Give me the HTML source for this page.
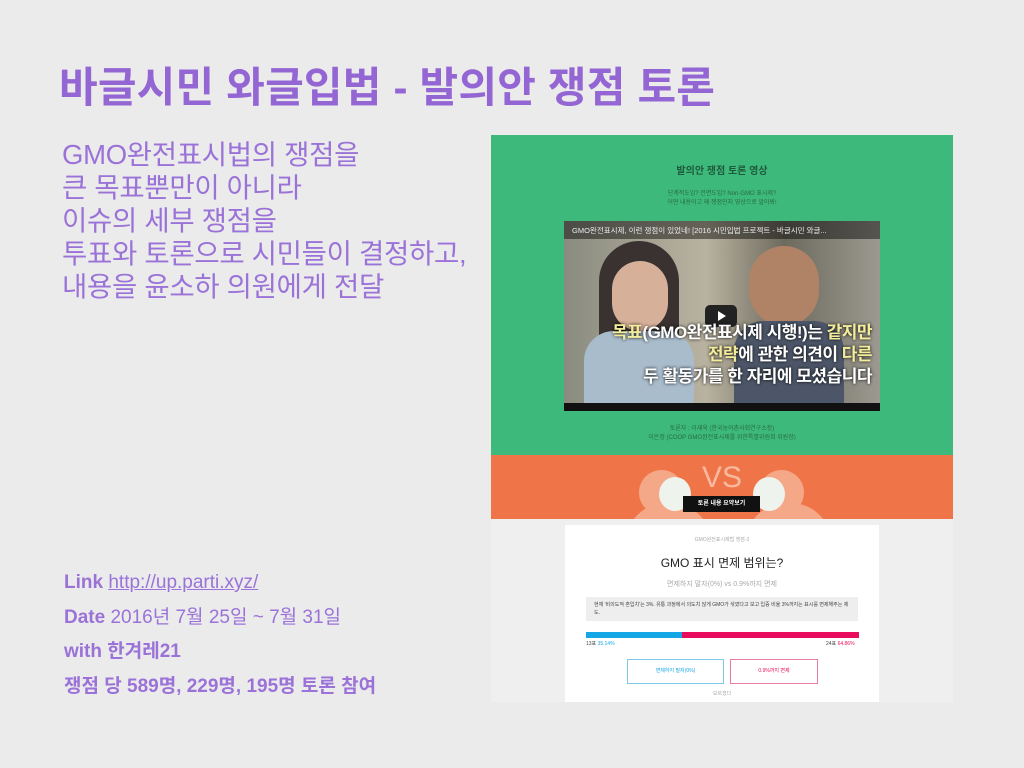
<!DOCTYPE html>
<html><head><meta charset="utf-8"><style>
body{margin:0;width:1024px;height:768px;background:#ebebeb;position:relative;overflow:hidden;font-family:"Liberation Sans","Noto Sans CJK KR",sans-serif;color:#9a6fd6}
.a{position:absolute}
h1{position:absolute;left:59px;top:54px;margin:0;font-size:42px;font-weight:bold;color:#9466d4;letter-spacing:0.2px;white-space:nowrap}
.body{left:62px;top:138px;font-size:27.5px;line-height:33px;color:#9a72d8;white-space:nowrap;letter-spacing:-0.3px}
.info{left:64px;top:566px;font-size:19px;line-height:34.5px;color:#9a72d8;white-space:nowrap}
.info b{font-weight:bold}
.c{text-align:center}
</style></head><body>
<h1>바글시민 와글입법 - 발의안 쟁점 토론</h1>
<div class="a body">GMO완전표시법의 쟁점을<br>큰 목표뿐만이 아니라<br>이슈의 세부 쟁점을<br>투표와 토론으로 시민들이 결정하고,<br>내용을 윤소하 의원에게 전달</div>
<div class="a info"><b>Link</b> <span style="text-decoration:underline">http://up.parti.xyz/</span><br><b>Date</b> 2016년 7월 25일 ~ 7월 31일<br><b>with 한겨레21</b><br><b>쟁점 당 589명, 229명, 195명 토론 참여</b></div>

<div class="a" style="left:491px;top:135px;width:462px;height:320px;background:#3dba7b"></div>
<div class="a c" style="left:491px;top:162px;width:462px;font-size:10px;color:#1f5a3c;font-weight:bold">발의안 쟁점 토론 영상</div>
<div class="a c" style="left:491px;top:190px;width:462px;font-size:6px;line-height:9px;color:#2a6a48">단계적도입? 전면도입? Non-GMO 표시제?<br>어떤 내용이고 왜 쟁점인지 영상으로 알아봐!</div>
<div class="a" style="left:564px;top:221px;width:316px;height:190px;background:#6a7060;overflow:hidden">
 <div class="a" style="left:0;top:0;width:316px;height:190px;background:linear-gradient(90deg,#8a8c80 0%,#b9b2a0 45%,#6d6a5e 70%,#9c9a90 100%)"></div>
 <div class="a" style="left:35px;top:20px;width:80px;height:170px;border-radius:40px 40px 0 0;background:#3a3230"></div>
 <div class="a" style="left:48px;top:40px;width:56px;height:70px;border-radius:28px;background:#d7b09a"></div>
 <div class="a" style="left:20px;top:110px;width:110px;height:80px;border-radius:30px 30px 0 0;background:#a9bccc"></div>
 <div class="a" style="left:185px;top:25px;width:70px;height:80px;border-radius:35px;background:#b08266"></div>
 <div class="a" style="left:170px;top:100px;width:110px;height:90px;border-radius:30px 30px 0 0;background:#4c5668"></div>
 <div class="a" style="left:0;top:0;width:316px;height:18px;background:rgba(0,0,0,.45)"></div>
 <div class="a" style="left:8px;top:4px;font-size:7.5px;color:#eee;white-space:nowrap">GMO완전표시제, 이런 쟁점이 있었네! [2016 시민입법 프로젝트 - 바글시민 와글...</div>
 <div class="a" style="left:141px;top:84px;width:32px;height:22px;border-radius:5px;background:#222"></div>
 <div class="a" style="left:154px;top:90px;border-left:8px solid #fff;border-top:5px solid transparent;border-bottom:5px solid transparent"></div>
 <div class="a" style="right:8px;top:101px;text-align:right;font-size:17px;font-weight:bold;line-height:22px;color:#fff;text-shadow:0 0 3px #000;white-space:nowrap;letter-spacing:-0.5px"><span style="color:#f3ec9a">목표</span>(GMO완전표시제 시행!)는 <span style="color:#f3ec9a">같지만</span><br><span style="color:#f3ec9a">전략</span>에 관한 의견이 <span style="color:#f3ec9a">다른</span><br>두 활동가를 한 자리에 모셨습니다</div>
 <div class="a" style="left:0;bottom:0;width:316px;height:8px;background:#111"></div>
</div>
<div class="a c" style="left:491px;top:425px;width:462px;font-size:6px;line-height:9px;color:#2a6a48">토론자 : 이재욱 (한국농어촌사회연구소장)<br>이은정 (COOP GMO완전표시제를 위한특별위원회 위원장)</div>

<div class="a" style="left:491px;top:455px;width:462px;height:64px;background:#ef7549;overflow:hidden">
 <div class="a" style="left:148px;top:15px;width:45px;height:45px;border-radius:50%;background:#f4a887"></div>
 <div class="a" style="left:135px;top:48px;width:85px;height:40px;border-radius:40px 40px 0 0;background:#f4a887"></div>
 <div class="a" style="left:268px;top:15px;width:45px;height:45px;border-radius:50%;background:#f4a887"></div>
 <div class="a" style="left:255px;top:48px;width:85px;height:40px;border-radius:40px 40px 0 0;background:#f4a887"></div>
 <div class="a" style="left:168px;top:22px;width:32px;height:34px;border-radius:50%;background:#eef3ee"></div>
 <div class="a" style="left:262px;top:22px;width:32px;height:34px;border-radius:50%;background:#eef3ee"></div>
 <div class="a c" style="left:0;top:6px;width:462px;font-size:30px;color:#f8b99f;font-weight:300">VS</div>
 <div class="a c" style="left:192px;top:41px;width:77px;height:16px;background:#111;color:#fff;font-size:6px;line-height:16px;font-weight:bold">토론 내용 요약보기</div>
</div>
<div class="a" style="left:491px;top:519px;width:462px;height:183px;background:#efefef"></div>
<div class="a" style="left:565px;top:525px;width:314px;height:177px;background:#fff"></div>
<div class="a c" style="left:565px;top:536px;width:314px;font-size:5px;color:#aaa">GMO완전표시제법 쟁점-3</div>
<div class="a c" style="left:565px;top:554px;width:314px;font-size:12px;color:#222">GMO 표시 면제 범위는?</div>
<div class="a c" style="left:565px;top:579px;width:314px;font-size:7px;color:#aaa">면제하지 말자(0%) vs 0.9%까지 면제</div>
<div class="a" style="left:586px;top:597px;width:272px;height:24px;background:#eee;font-size:5px;line-height:8px;color:#444;padding:4px 8px;box-sizing:border-box">현재 '비의도적 혼입치'는 3%. 유통 과정에서 의도치 않게 GMO가 섞였다고 보고 입증 비율 3%까지는 표시를 면제해주는 제도.</div>
<div class="a" style="left:586px;top:632px;width:96px;height:6px;background:#15a6e6"></div>
<div class="a" style="left:682px;top:632px;width:177px;height:6px;background:#e90c5c"></div>
<div class="a" style="left:586px;top:640px;font-size:5px;color:#444">13표 <span style="color:#15a6e6">35.14%</span></div>
<div class="a" style="left:826px;top:640px;font-size:5px;color:#444">24표 <span style="color:#e90c5c">64.86%</span></div>
<div class="a c" style="left:627px;top:659px;width:97px;height:25px;border:1px solid #7cc9ea;box-sizing:border-box;font-size:5px;line-height:23px;color:#15a6e6">면제하지 말자(0%)</div>
<div class="a c" style="left:730px;top:659px;width:88px;height:25px;border:1px solid #e97ca0;box-sizing:border-box;font-size:5px;line-height:23px;color:#e90c5c">0.9%까지 면제</div>
<div class="a c" style="left:565px;top:690px;width:314px;font-size:5px;color:#aaa">모르겠다</div>
</body></html>
